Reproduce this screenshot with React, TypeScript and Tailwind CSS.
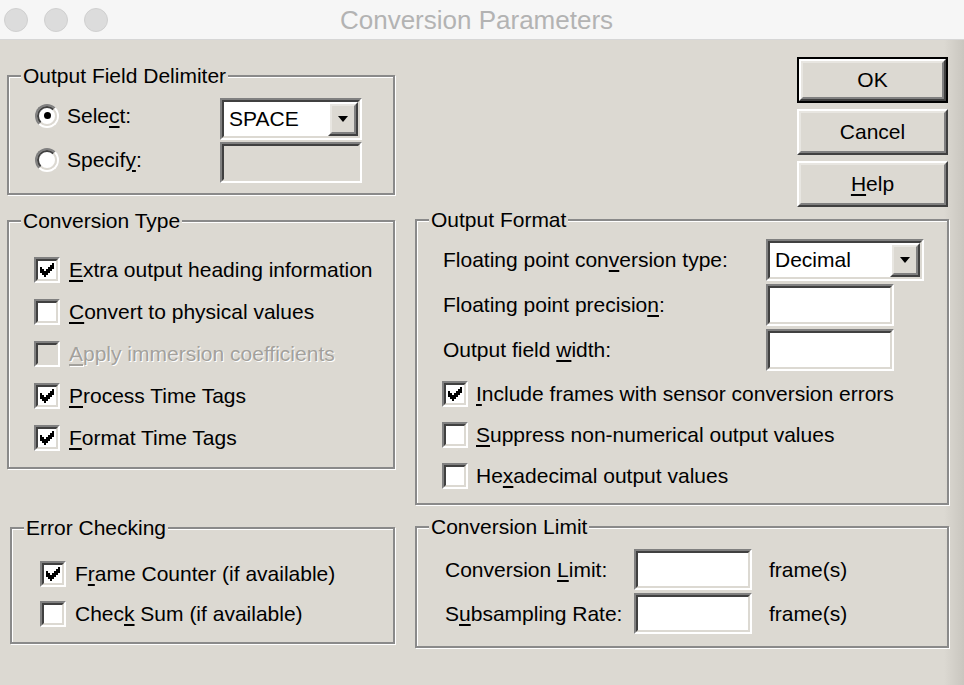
import React from 'react';

const CHECK_PIXELS = [
  '......X',
  '.....XX',
  'X...XXX',
  'XX.XXX.',
  'XXXXX..',
  '.XXX...',
  '..X....',
];

function CheckMark() {
  return (
    <svg width="14" height="14" viewBox="0 0 7 7" shapeRendering="crispEdges">
      {CHECK_PIXELS.flatMap((row, y) =>
        row
          .split('')
          .map((c, x) =>
            c === 'X' ? <rect key={`${x}-${y}`} x={x} y={y} width="1" height="1" fill="#000" /> : null
          )
      )}
    </svg>
  );
}

// sunken 3d frame (text boxes, combos, checkboxes)
function Sunken({
  className = '',
  inner = 'bg-white',
  children,
}: {
  className?: string;
  inner?: string;
  children?: React.ReactNode;
}) {
  return (
    <div className={`border-2 border-t-[#808080] border-l-[#808080] border-r-white border-b-white ${className}`}>
      <div className={`h-full border-2 border-t-[#404040] border-l-[#404040] border-r-[#dcd9d2] border-b-[#dcd9d2] ${inner}`}>
        {children}
      </div>
    </div>
  );
}

function Raised({ className = '', children }: { className?: string; children?: React.ReactNode }) {
  return (
    <div className={`border-2 border-t-white border-l-white border-r-[#404040] border-b-[#404040] bg-[#dcd9d2] ${className}`}>
      <div className="h-full border-2 border-t-[#e8e6e1] border-l-[#e8e6e1] border-r-[#808080] border-b-[#808080] flex items-center justify-center">
        {children}
      </div>
    </div>
  );
}

function Label({ a = '', u, b = '', disabled }: { a?: string; u: string; b?: string; disabled?: boolean }) {
  return (
    <span className={`whitespace-nowrap ${disabled ? 'text-[#a3a19c] [text-shadow:1px_1px_0_#fff]' : 'text-black'}`}>
      {a}
      <span className="underline decoration-[1.5px] underline-offset-[3px]">{u}</span>
      {b}
    </span>
  );
}

function CheckBox({ checked, disabled }: { checked?: boolean; disabled?: boolean }) {
  return (
    <Sunken
      className="w-[26px] h-[26px] shrink-0"
      inner={`flex items-center justify-center ${disabled ? 'bg-[#dcd9d2]' : 'bg-white'}`}
    >
      {checked && <CheckMark />}
    </Sunken>
  );
}

function Radio({ checked }: { checked?: boolean }) {
  return (
    <div className="w-[24px] h-[24px] shrink-0 rounded-full border-2 border-t-[#808080] border-l-[#808080] border-r-white border-b-white">
      <div className="h-full rounded-full border-2 border-t-[#404040] border-l-[#404040] border-r-[#dcd9d2] border-b-[#dcd9d2] bg-white flex items-center justify-center">
        {checked && <div className="w-[7px] h-[7px] rounded-full bg-black" />}
      </div>
    </div>
  );
}

function Combo({ value, width }: { value: string; width: string }) {
  return (
    <Sunken className={`${width} h-[42px]`} inner="bg-white flex">
      <span className="flex-1 pl-[5px] leading-[34px]">{value}</span>
      <Raised className="w-[30px] h-full">
        <svg width="10" height="6" viewBox="0 0 10 6">
          <polygon points="0,0 10,0 5,6" fill="#000" />
        </svg>
      </Raised>
    </Sunken>
  );
}

function Group({
  title,
  className = '',
  children,
}: {
  title: string;
  className?: string;
  children: React.ReactNode;
}) {
  return (
    <fieldset
      className={`border-2 border-[#8a8a8a] shadow-[inset_1px_1px_0_#fff,1px_1px_0_#fff] ${className}`}
    >
      <legend className="ml-[12px] px-[2px] leading-[24px] bg-[#dcd9d2]">{title}</legend>
      {children}
    </fieldset>
  );
}

function CheckRow({
  h,
  gap,
  checked,
  disabled,
  a,
  u,
  b,
}: {
  h: string;
  gap: string;
  checked?: boolean;
  disabled?: boolean;
  a?: string;
  u: string;
  b?: string;
}) {
  return (
    <div className={`flex items-center ${h} ${gap}`}>
      <CheckBox checked={checked} disabled={disabled} />
      <Label a={a} u={u} b={b} disabled={disabled} />
    </div>
  );
}

function PushButton({ children, isDefault }: { children: React.ReactNode; isDefault?: boolean }) {
  if (isDefault) {
    return (
      <div className="w-[151px] h-[46px] border-2 border-black">
        <Raised className="h-full">{children}</Raised>
      </div>
    );
  }
  return <Raised className="w-[151px] h-[46px]">{children}</Raised>;
}

export default function App() {
  return (
    <div className="w-[964px] h-[685px] overflow-hidden font-['Liberation_Sans',Arial,sans-serif] text-[21px] leading-[24px] text-black">
      {/* title bar */}
      <div className="h-[40px] flex items-center bg-[#f6f6f6] border-b border-[#d6d6d6]">
        <div className="w-[120px] flex gap-[16px] pl-[4px]">
          <div className="w-[24px] h-[24px] rounded-full bg-[#dcdcdc] border border-[#d0d0d0]" />
          <div className="w-[24px] h-[24px] rounded-full bg-[#dcdcdc] border border-[#d0d0d0]" />
          <div className="w-[24px] h-[24px] rounded-full bg-[#dcdcdc] border border-[#d0d0d0]" />
        </div>
        <div className="flex-1 text-center text-[26px] text-[#b3b3b3]">Conversion Parameters</div>
        <div className="w-[131px]" />
      </div>

      {/* dialog body */}
      <div className="h-[645px] flex bg-[linear-gradient(to_right,#dcd9d2_0px,#dcd9d2_944px,#c9c6bf_964px)]">
        {/* left column */}
        <div className="w-[388px] ml-[7px] flex flex-col">
          <Group title="Output Field Delimiter" className="mt-[24px]">
            <div className="pt-[10px] pb-[10px] pl-[26px] grid grid-cols-[185px_142px] gap-y-[2px]">
              <div className="h-[41px] flex items-center gap-[8px] pb-[6px]">
                <Radio checked />
                <Label a="Sele" u="c" b="t:" />
              </div>
              <Combo value="SPACE" width="w-[142px]" />
              <div className="h-[41px] flex items-center gap-[8px] pb-[6px]">
                <Radio />
                <Label a="Specif" u="y" b=":" />
              </div>
              <Sunken className="w-[142px] h-[41px]" inner="bg-[#dcd9d2]" />
            </div>
          </Group>

          <Group title="Conversion Type" className="mt-[14px]">
            <div className="pt-[16px] pb-[8px] pl-[25px] flex flex-col">
              <CheckRow h="h-[42px]" gap="gap-[9px]" checked u="E" b="xtra output heading information" />
              <CheckRow h="h-[42px]" gap="gap-[9px]" u="C" b="onvert to physical values" />
              <CheckRow h="h-[42px]" gap="gap-[9px]" disabled u="A" b="pply immersion coefficients" />
              <CheckRow h="h-[42px]" gap="gap-[9px]" checked u="P" b="rocess Time Tags" />
              <CheckRow h="h-[42px]" gap="gap-[9px]" checked u="F" b="ormat Time Tags" />
            </div>
          </Group>

          <Group title="Error Checking" className="mt-[47px] ml-[3px]">
            <div className="pt-[14px] pb-[8px] pl-[28px] flex flex-col">
              <CheckRow h="h-[40px]" gap="gap-[9px]" checked a="F" u="r" b="ame Counter (if available)" />
              <CheckRow h="h-[40px]" gap="gap-[9px]" a="Chec" u="k" b=" Sum (if available)" />
            </div>
          </Group>
        </div>

        {/* right column */}
        <div className="w-[534px] ml-[20px] flex flex-col">
          <div className="mt-[17px] mr-[1px] flex flex-col items-end gap-[6px]">
            <PushButton isDefault>OK</PushButton>
            <PushButton>Cancel</PushButton>
            <PushButton>
              <Label u="H" b="elp" />
            </PushButton>
          </div>

          <Group title="Output Format" className="mt-[1px]">
            <div className="pt-[7px] pb-[7px]">
              <div className="pl-[26px] flex flex-col gap-[3px]">
                <div className="h-[42px] flex items-center">
                  <div className="w-[323px]">
                    <Label a="Floating point con" u="v" b="ersion type:" />
                  </div>
                  <Combo value="Decimal" width="w-[158px]" />
                </div>
                <div className="h-[42px] flex items-center">
                  <div className="w-[323px]">
                    <Label a="Floating point precisio" u="n" b=":" />
                  </div>
                  <Sunken className="w-[128px] h-[42px]" />
                </div>
                <div className="h-[42px] flex items-center">
                  <div className="w-[323px]">
                    <Label a="Output field " u="w" b="idth:" />
                  </div>
                  <Sunken className="w-[128px] h-[42px]" />
                </div>
              </div>
              <div className="mt-[2px] pl-[25px] flex flex-col">
                <CheckRow h="h-[41px]" gap="gap-[8px]" checked u="I" b="nclude frames with sensor conversion errors" />
                <CheckRow h="h-[41px]" gap="gap-[8px]" u="S" b="uppress non-numerical output values" />
                <CheckRow h="h-[41px]" gap="gap-[8px]" a="He" u="x" b="adecimal output values" />
              </div>
            </div>
          </Group>

          <Group title="Conversion Limit" className="mt-[10px]">
            <div className="pt-[10px] pb-[12px] pl-[28px] flex flex-col gap-[3px]">
              <div className="h-[41px] flex items-center">
                <div className="w-[189px]">
                  <Label a="Conversion " u="L" b="imit:" />
                </div>
                <Sunken className="w-[118px] h-[41px]" />
                <span className="ml-[17px]">frame(s)</span>
              </div>
              <div className="h-[41px] flex items-center">
                <div className="w-[189px]">
                  <Label a="S" u="u" b="bsampling Rate:" />
                </div>
                <Sunken className="w-[118px] h-[41px]" />
                <span className="ml-[17px]">frame(s)</span>
              </div>
            </div>
          </Group>
        </div>
      </div>
    </div>
  );
}
